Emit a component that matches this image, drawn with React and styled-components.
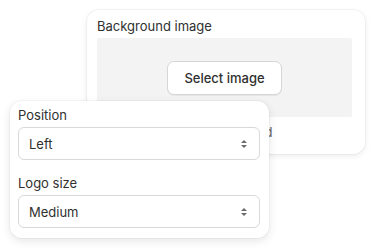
import React from "react";
import styled, { createGlobalStyle } from "styled-components";

const Global = createGlobalStyle`
  html, body { margin: 0; padding: 0; background: #ffffff; }
  body {
    font-family: Inter, "Noto Sans", "Liberation Sans", sans-serif;
    color: #303030;
    -webkit-font-smoothing: antialiased;
  }
`;

const Stage = styled.div`
  position: relative;
  width: 375px;
  height: 248px;
  overflow: hidden;
  padding: 10px 0 0 87px;
  box-sizing: border-box;
`;

const Card = styled.div`
  background: #ffffff;
  border-radius: 12px;
  box-sizing: border-box;
  box-shadow: 0 0 0 1px rgba(0, 0, 0, 0.035), 0 2px 6px rgba(0, 0, 0, 0.08);
`;

const BackCard = styled(Card)`
  width: 278px;
  height: 144px;
  padding: 8px 13px 0 10px;
`;

const FrontCard = styled(Card)`
  position: absolute;
  left: 10px;
  top: 101px;
  width: 259px;
  height: 137px;
  padding: 6px 9px 0 8px;
  display: flex;
  flex-direction: column;
  box-shadow: 0 0 0 1px rgba(0, 0, 0, 0.03), 0 3px 10px rgba(0, 0, 0, 0.1);
`;

const Label = styled.div`
  font-size: 13px;
  line-height: 16px;
  margin-bottom: ${(p) => p.$mb || 4}px;
  margin-top: ${(p) => p.$mt || 0}px;
`;

const DropZone = styled.div`
  height: 79px;
  background: #f3f3f3;
  border-radius: 2px;
  display: flex;
  align-items: center;
  justify-content: center;
`;

const Button = styled.button`
  width: 115px;
  height: 34px;
  border: 1px solid #d6d6d6;
  border-radius: 7px;
  background: #ffffff;
  font-family: inherit;
  font-size: 13px;
  font-weight: 500;
  color: #303030;
  box-shadow: 0 1px 0 rgba(0, 0, 0, 0.05);
`;

const Hint = styled.div`
  font-size: 13px;
  line-height: 16px;
  color: #616161;
  margin-top: 7px;
`;

const Select = styled.div`
  height: 33px;
  border: 1px solid #d9d9d9;
  border-radius: 6px;
  box-sizing: border-box;
  display: flex;
  align-items: center;
  justify-content: space-between;
  padding: 0 11px 0 10px;
  font-size: 13px;
  background: #fff;
`;

const Arrows = () => (
  <svg width="8" height="10" viewBox="0 0 8 10">
    <path d="M4 1 L7 4 L1 4 Z" fill="#6b6b6b" />
    <path d="M4 9 L7 6 L1 6 Z" fill="#6b6b6b" />
  </svg>
);

export default function App() {
  return (
    <>
      <Global />
      <Stage>
        <BackCard>
          <Label $mb={4}>Background image</Label>
          <DropZone>
            <Button>Select image</Button>
          </DropZone>
          <Hint>Large images recommended</Hint>
        </BackCard>
        <FrontCard>
          <Label $mb={4}>Position</Label>
          <Select>
            <span>Left</span>
            <Arrows />
          </Select>
          <Label $mt={15} $mb={4}>Logo size</Label>
          <Select>
            <span>Medium</span>
            <Arrows />
          </Select>
        </FrontCard>
      </Stage>
    </>
  );
}
